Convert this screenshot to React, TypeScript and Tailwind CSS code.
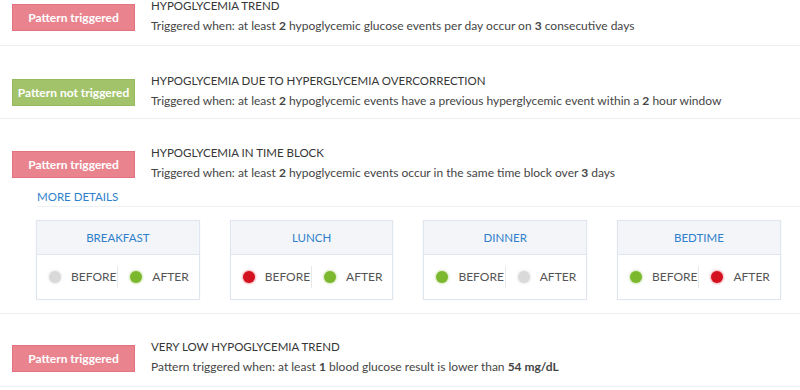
import React from "react";

type Status = "red" | "green" | "gray";

const dotClass: Record<Status, string> = {
  red: "bg-[#d3111f] shadow-[0_0_2px_1px_rgba(211,17,31,0.35)]",
  green: "bg-[#7cb82e] shadow-[0_0_2px_1px_rgba(124,184,46,0.35)]",
  gray: "bg-[#d9d9d9] shadow-[0_0_2px_1px_rgba(200,200,200,0.35)]",
};

function Badge({ triggered }: { triggered: boolean }) {
  return (
    <div
      className={
        triggered
          ? "w-[123px] h-[27px] shrink-0 flex items-center justify-center bg-[#e9848f] border border-[#e2727f] text-white text-[12px] font-bold"
          : "w-[123px] h-[27px] shrink-0 flex items-center justify-center bg-[#a2c36a] border border-[#97b95f] text-white text-[12px] font-bold"
      }
    >
      {triggered ? "Pattern triggered" : "Pattern not triggered"}
    </div>
  );
}

function RowHead({
  triggered,
  title,
  children,
}: {
  triggered: boolean;
  title: string;
  children: React.ReactNode;
}) {
  return (
    <div className="flex items-start pl-[12px]">
      <Badge triggered={triggered} />
      <div className="ml-[16px] -mt-[8px] -mb-[5px] leading-[20px]">
        <div className="text-[#363636] text-[11.5px]">{title}</div>
        <div className="text-[#454545] text-[12px]">{children}</div>
      </div>
    </div>
  );
}

function Card({ name, before, after }: { name: string; before: Status; after: Status }) {
  return (
    <div className="w-[163.7px] border border-[#dfe6f0] shadow-[0_0_2px_rgba(0,0,0,0.04)] bg-white">
      <div className="h-[34px] flex items-center justify-center bg-[#f4f5f8] border-b border-[#dfe6f0] text-[#2f80cc] text-[11.5px]">
        {name}
      </div>
      <div className="h-[44px] flex items-center text-[12px] text-[#555555]">
        <div className="flex-1 flex items-center pl-[12px] gap-[10px]">
          <span className={"w-[12px] h-[12px] rounded-full " + dotClass[before]} />
          <span>BEFORE</span>
        </div>
        <div className="w-px h-[22px] bg-[#e8e8e8]" />
        <div className="flex-1 flex items-center pl-[12px] gap-[10px]">
          <span className={"w-[12px] h-[12px] rounded-full " + dotClass[after]} />
          <span>AFTER</span>
        </div>
      </div>
    </div>
  );
}

export default function App() {
  return (
    <div className="w-[800px] h-[390px] overflow-hidden bg-white font-['Lato',sans-serif]">
      <div className="pt-[4px] pb-[14px] border-b border-[#eeeeee]">
        <RowHead triggered title="HYPOGLYCEMIA TREND">
          Triggered when: at least <b>2</b> hypoglycemic glucose events per day occur on <b>3</b> consecutive days
        </RowHead>
      </div>
      <div className="pt-[33px] pb-[12px] border-b border-[#eeeeee]">
        <RowHead triggered={false} title="HYPOGLYCEMIA DUE TO HYPERGLYCEMIA OVERCORRECTION">
          Triggered when: at least <b>2</b> hypoglycemic events have a previous hyperglycemic event within a <b>2</b> hour window
        </RowHead>
      </div>
      <div className="pt-[32px] pb-[13px] border-b border-[#eeeeee]">
        <RowHead triggered title="HYPOGLYCEMIA IN TIME BLOCK">
          Triggered when: at least <b>2</b> hypoglycemic events occur in the same time block over <b>3</b> days
        </RowHead>
        <div className="ml-[37px] mt-[11px] border-b border-[#eef0f2] pb-[1px] text-[11.5px] leading-[16px] text-[#2f80cc]">
          MORE DETAILS
        </div>
        <div className="flex gap-[30px] ml-[36px] mt-[13px]">
          <Card name="BREAKFAST" before="gray" after="green" />
          <Card name="LUNCH" before="red" after="green" />
          <Card name="DINNER" before="green" after="gray" />
          <Card name="BEDTIME" before="green" after="red" />
        </div>
      </div>
      <div className="pt-[31px] pb-[14px] border-b border-[#eeeeee]">
        <RowHead triggered title="VERY LOW HYPOGLYCEMIA TREND">
          Pattern triggered when: at least <b>1</b> blood glucose result is lower than <b>54 mg/dL</b>
        </RowHead>
      </div>
    </div>
  );
}
